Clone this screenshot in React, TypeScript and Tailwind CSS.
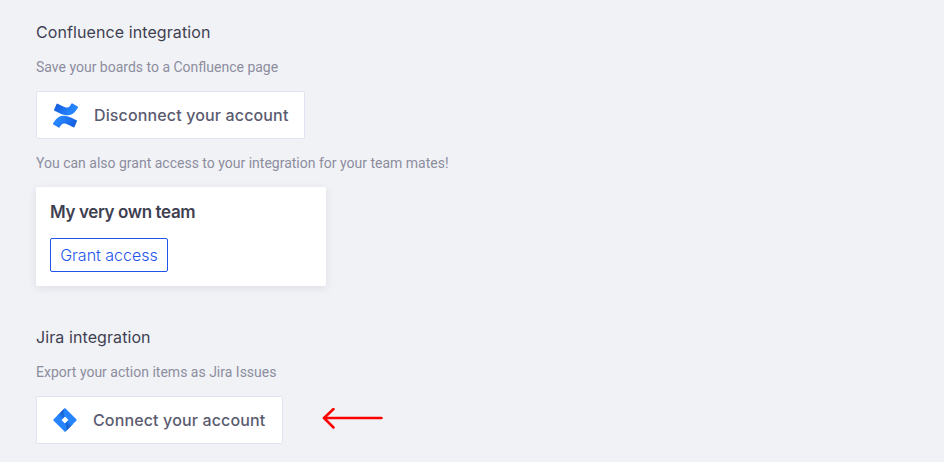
const headingFont = "font-['Inter',sans-serif]";
const bodyFont = "font-['Roboto',sans-serif]";

function ConfluenceLogo() {
  return (
    <svg width="25" height="25" viewBox="0 0 24 24" fill="none">
      <defs>
        <linearGradient id="conf-a" x1="22" y1="24" x2="8" y2="14" gradientUnits="userSpaceOnUse">
          <stop offset="0" stopColor="#1257d8" />
          <stop offset="1" stopColor="#2684ff" />
        </linearGradient>
        <linearGradient id="conf-b" x1="2" y1="0" x2="16" y2="10" gradientUnits="userSpaceOnUse">
          <stop offset="0" stopColor="#1257d8" />
          <stop offset="1" stopColor="#2684ff" />
        </linearGradient>
      </defs>
      <path
        d="M.87 18.257c-.248.382-.53.875-.763 1.245a.764.764 0 0 0 .255 1.04l4.965 3.054a.764.764 0 0 0 1.058-.26c.199-.332.454-.763.733-1.221 1.967-3.247 3.945-2.853 7.508-1.146l4.957 2.337a.764.764 0 0 0 1.028-.382l2.364-5.346a.764.764 0 0 0-.382-1 599.851 599.851 0 0 1-4.965-2.361C10.911 10.97 5.224 11.185.87 18.257z"
        fill="url(#conf-a)"
      />
      <path
        d="M23.131 5.743c.249-.405.531-.875.764-1.25a.764.764 0 0 0-.256-1.034L18.675.404a.764.764 0 0 0-1.058.26c-.195.335-.451.763-.734 1.225-1.966 3.246-3.945 2.850-7.508 1.146L4.437.694a.764.764 0 0 0-1.027.382L1.046 6.422a.764.764 0 0 0 .382 1c1.039.49 3.105 1.467 4.965 2.361 6.698 3.246 12.392 3.029 16.738-4.040z"
        fill="url(#conf-b)"
      />
    </svg>
  );
}

function JiraLogo() {
  return (
    <svg width="24" height="24" viewBox="0 0 24 24" fill="none">
      <defs>
        <linearGradient id="jira-a" x1="11.500" y1="4.500" x2="6.500" y2="9.500" gradientUnits="userSpaceOnUse">
          <stop offset="0" stopColor="#0f52ba" />
          <stop offset="1" stopColor="#2684ff" />
        </linearGradient>
        <linearGradient id="jira-b" x1="12.500" y1="19.500" x2="17.500" y2="14.500" gradientUnits="userSpaceOnUse">
          <stop offset="0" stopColor="#0f52ba" />
          <stop offset="1" stopColor="#2684ff" />
        </linearGradient>
      </defs>
      <path
        d="M23.323 11.33 13.001 1.005 11.996 0 4.225 7.77.67 11.33a.95.95 0 0 0 0 1.347l7.100 7.100L11.996 24l7.770-7.771.121-.121 3.436-3.430a.95.95 0 0 0 0-1.347zM11.996 15.548 8.450 12l3.546-3.548L15.542 12z"
        fill="#2684ff"
      />
      <path d="M11.996 8.452A5.970 5.970 0 0 1 11.970.024L4.210 7.780l4.220 4.220z" fill="url(#jira-a)" />
      <path d="M15.552 11.990 11.996 15.548a5.970 5.970 0 0 1 0 8.452l7.780-7.790z" fill="url(#jira-b)" />
    </svg>
  );
}

function AccountButton({ logo, label, width, gap }: { logo: React.ReactNode; label: string; width: string; gap: string }) {
  return (
    <button
      type="button"
      className={`flex h-12 ${width} ${gap} items-center rounded-[2px] border border-[#e1e4f0] bg-white pl-4 text-base font-medium tracking-[0.14px] text-[#5b5b70] ${headingFont}`}
    >
      {logo}
      <span>{label}</span>
    </button>
  );
}

export default function App() {
  return (
    <div className="h-[462px] w-[944px] overflow-hidden bg-[#f0f2f6] pl-9 pt-[21px]">
      <h2 className={`text-base leading-[22px] tracking-[0.09px] text-[#3f3f52] ${headingFont}`}>Confluence integration</h2>
      <p className={`mt-[14px] text-sm leading-5 text-[#8d8d9e] ${bodyFont}`}>Save your boards to a Confluence page</p>
      <div className="mt-[14px]">
        <AccountButton logo={<ConfluenceLogo />} label="Disconnect your account" width="w-[269px]" gap="gap-4" />
      </div>
      <p className={`mt-[14px] text-sm leading-5 text-[#8d8d9e] ${bodyFont}`}>
        You can also grant access to your integration for your team mates!
      </p>
      <div className="mt-[14px] h-[99px] w-[290px] rounded-[2px] bg-white px-[14px] pt-[13px] shadow-[0_2px_8px_rgba(60,60,90,0.1)]">
        <h3 className={`text-[17px] leading-6 font-semibold tracking-[-0.38px] text-[#3f3f52] ${headingFont}`}>My very own team</h3>
        <button
          type="button"
          className={`mt-[14px] flex h-[34px] w-[118px] items-center justify-center rounded-[2px] border border-[#1f55ee] text-base font-light text-[#1f55ee] ${headingFont}`}
        >
          Grant access
        </button>
      </div>
      <h2 className={`mt-[40px] text-base leading-[22px] tracking-[0.09px] text-[#3f3f52] ${headingFont}`}>Jira integration</h2>
      <p className={`mt-[14px] text-sm leading-5 text-[#8d8d9e] ${bodyFont}`}>Export your action items as Jira Issues</p>
      <div className="mt-[14px] flex items-center gap-[39px]">
        <AccountButton logo={<JiraLogo />} label="Connect your account" width="w-[247px]" gap="gap-4" />
        <svg width="62" height="24" viewBox="0 0 62 24" fill="none" stroke="#ff0000" strokeWidth="2.500" strokeLinecap="round" strokeLinejoin="round">
          <path d="M59.500 10H2" />
          <path d="M11.500 1 2 10 11.500 19.500" />
        </svg>
      </div>
    </div>
  );
}
